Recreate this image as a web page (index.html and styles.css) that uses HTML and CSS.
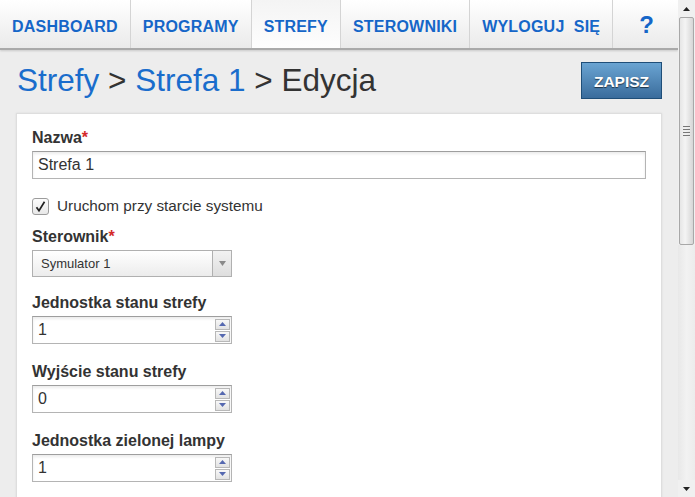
FILE: index.html
```html
<!DOCTYPE html>
<html lang="pl">
<head>
<meta charset="utf-8">
<title>Strefy - Edycja</title>
<link rel="stylesheet" href="styles.css">
</head>
<body>
<div class="window">
  <div class="page">
    <nav class="nav">
      <a class="nav-item">DASHBOARD</a>
      <a class="nav-item">PROGRAMY</a>
      <a class="nav-item active">STREFY</a>
      <a class="nav-item">STEROWNIKI</a>
      <a class="nav-item">WYLOGUJ&nbsp; SIĘ</a>
      <a class="nav-item help">?</a>
    </nav>
    <div class="content">
      <div class="header">
        <h1 class="title"><a class="crumb">Strefy</a> &gt; <a class="crumb">Strefa 1</a> &gt; Edycja</h1>
        <button class="btn-save">ZAPISZ</button>
      </div>
      <div class="card">
        <div class="field f-name">
          <label class="label">Nazwa<span class="req">*</span></label>
          <input class="text-input" type="text" value="Strefa 1">
        </div>
        <div class="check-row">
          <span class="checkbox"><svg width="13" height="13" viewBox="0 0 13 13"><path d="M2.5 7.2 L5 10.8 L10.5 1.8" fill="none" stroke="#222" stroke-width="1.7"/></svg></span>
          <span class="check-label">Uruchom przy starcie systemu</span>
        </div>
        <div class="field f-select">
          <label class="label">Sterownik<span class="req">*</span></label>
          <div class="select">
            <span class="select-value">Symulator 1</span>
            <span class="select-btn"><svg width="7" height="5" viewBox="0 0 7 5"><path d="M0 0 L7 0 L3.5 5 Z" fill="#8a8a8a"/></svg></span>
          </div>
        </div>
        <div class="field f-num">
          <label class="label">Jednostka stanu strefy</label>
          <div class="numbox">
            <input class="num-input" type="text" value="1">
            <div class="spin">
              <span class="spin-btn"><svg width="7" height="4" viewBox="0 0 7 4"><path d="M0 4 L7 4 L3.5 0 Z" fill="#5568b0"/></svg></span>
              <span class="spin-btn"><svg width="7" height="4" viewBox="0 0 7 4"><path d="M0 0 L7 0 L3.5 4 Z" fill="#5568b0"/></svg></span>
            </div>
          </div>
        </div>
        <div class="field f-num">
          <label class="label">Wyjście stanu strefy</label>
          <div class="numbox">
            <input class="num-input" type="text" value="0">
            <div class="spin">
              <span class="spin-btn"><svg width="7" height="4" viewBox="0 0 7 4"><path d="M0 4 L7 4 L3.5 0 Z" fill="#5568b0"/></svg></span>
              <span class="spin-btn"><svg width="7" height="4" viewBox="0 0 7 4"><path d="M0 0 L7 0 L3.5 4 Z" fill="#5568b0"/></svg></span>
            </div>
          </div>
        </div>
        <div class="field f-num">
          <label class="label">Jednostka zielonej lampy</label>
          <div class="numbox">
            <input class="num-input" type="text" value="1">
            <div class="spin">
              <span class="spin-btn"><svg width="7" height="4" viewBox="0 0 7 4"><path d="M0 4 L7 4 L3.5 0 Z" fill="#5568b0"/></svg></span>
              <span class="spin-btn"><svg width="7" height="4" viewBox="0 0 7 4"><path d="M0 0 L7 0 L3.5 4 Z" fill="#5568b0"/></svg></span>
            </div>
          </div>
        </div>
      </div>
    </div>
  </div>
  <div class="scrollbar">
    <div class="sb-btn"><svg width="7" height="4" viewBox="0 0 7 4"><path d="M0 4 L7 4 L3.5 0 Z" fill="#222"/></svg></div>
    <div class="sb-thumb"><span class="grip"></span><span class="grip"></span><span class="grip"></span><span class="grip"></span></div>
    <div class="sb-track"></div>
    <div class="sb-btn"><svg width="7" height="4" viewBox="0 0 7 4"><path d="M0 0 L7 0 L3.5 4 Z" fill="#222"/></svg></div>
  </div>
</div>
</body>
</html>
```
FILE: styles.css
```css
* { box-sizing: border-box; }
html, body { margin: 0; padding: 0; height: 100%; overflow: hidden; }
body {
  font-family: "Liberation Sans", Arial, sans-serif;
  background: #ededed;
  color: #333;
}
.window { display: flex; height: 100vh; }
.page { flex: 1; min-width: 0; overflow: hidden; }

.nav {
  display: flex;
  height: 50px;
  background: linear-gradient(#ffffff, #eaeaea);
  border-bottom: 2px solid #a9a9a9;
  box-shadow: 0 1px 2px rgba(0,0,0,0.15);
}
.nav-item {
  display: flex;
  align-items: center;
  padding: 6px 12px 0 12px;
  border-right: 1px solid #d4d4d4;
  color: #1566c8;
  font-weight: bold;
  font-size: 16px;
  letter-spacing: 0.2px;
  white-space: nowrap;
}
.nav-item.active { background: linear-gradient(#f4f4f4, #fdfdfd); }
.nav-item.help {
  flex: 1;
  justify-content: center;
  border-right: none;
  font-size: 24px;
  padding: 2px 0 0 2px;
}

.content { padding: 12px 16px 0 16px; }
.header {
  display: flex;
  align-items: center;
  justify-content: space-between;
  margin-bottom: 14px;
}
.title {
  margin: 0;
  font-weight: normal;
  font-size: 31.5px;
  line-height: 37px;
  color: #333;
  padding-left: 1px;
}
.crumb { color: #1a6dcc; }
.btn-save {
  width: 81px;
  height: 37px;
  border: 1px solid #1f4e78;
  background: linear-gradient(#6aa4d2, #3a6c9c);
  color: #fff;
  font-family: "Liberation Sans", Arial, sans-serif;
  font-weight: bold;
  font-size: 15.5px;
  text-shadow: 0 1px 1px rgba(0,0,0,0.6);
  padding: 2px 0 0 0;
}

.card {
  background: #fff;
  border: 1px solid #dedede;
  box-shadow: 0 0 2px rgba(0,0,0,0.08);
  padding: 15px 15px 20px 15px;
}
.label {
  display: block;
  font-weight: bold;
  font-size: 16px;
  line-height: 18px;
  margin-bottom: 4px;
  color: #333;
}
.req { color: #d42a2a; }
.text-input {
  display: block;
  width: 100%;
  height: 28px;
  border: 1px solid #b4b4b4;
  border-top-color: #9e9e9e;
  box-shadow: inset 0 2px 3px rgba(0,0,0,0.08);
  font-family: "Liberation Sans", Arial, sans-serif;
  font-size: 16px;
  color: #333;
  padding: 0 5px;
  outline: none;
}
.f-name { margin-bottom: 18px; }
.check-row {
  display: flex;
  align-items: center;
  height: 18px;
  margin-bottom: 13px;
}
.checkbox {
  width: 17px;
  height: 17px;
  border: 1px solid #9c9c9c;
  border-radius: 3px;
  background: linear-gradient(#fdfdfd, #e8e8e8);
  display: flex;
  align-items: center;
  justify-content: center;
  margin-right: 8px;
}
.check-label { font-size: 15.3px; color: #333; }

.f-select { margin-bottom: 17px; }
.select {
  display: flex;
  width: 200px;
  height: 27px;
  border: 1px solid #b0b0b0;
  background: linear-gradient(#ffffff, #ececec);
}
.select-value {
  flex: 1;
  display: flex;
  align-items: center;
  padding-left: 8px;
  font-size: 13px;
  color: #333;
}
.select-btn {
  width: 19px;
  border-left: 1px solid #b0b0b0;
  background: linear-gradient(#f2f2f2, #dedede);
  display: flex;
  align-items: center;
  justify-content: center;
}

.f-num { margin-bottom: 19px; }
.numbox {
  display: flex;
  align-items: center;
  width: 200px;
  height: 28px;
  border: 1px solid #b4b4b4;
  border-top-color: #9e9e9e;
  box-shadow: inset 0 2px 3px rgba(0,0,0,0.08);
  background: #fff;
  padding-right: 1px;
}
.num-input {
  flex: 1;
  min-width: 0;
  height: 100%;
  border: none;
  background: transparent;
  font-family: "Liberation Sans", Arial, sans-serif;
  font-size: 16px;
  color: #333;
  padding: 0 5px;
  outline: none;
}
.spin {
  display: flex;
  flex-direction: column;
  gap: 1px;
  width: 15px;
}
.spin-btn {
  height: 11px;
  border: 1px solid #b8b8b8;
  background: linear-gradient(#f8f8f8, #e2e2e2);
  display: flex;
  align-items: center;
  justify-content: center;
}

.scrollbar {
  width: 17px;
  display: flex;
  flex-direction: column;
  background: #f0f0f0;
}
.sb-btn {
  height: 17px;
  display: flex;
  align-items: center;
  justify-content: center;
  background: #f0f0f0;
}
.sb-thumb {
  height: 228px;
  margin: 0 1px;
  border: 1px solid #a8a8a8;
  border-radius: 2px;
  background: linear-gradient(90deg, #e6e6e6, #f4f4f4 40%, #d6d6d6);
  display: flex;
  flex-direction: column;
  align-items: center;
  justify-content: center;
  gap: 1px;
}
.grip { width: 7px; height: 1px; background: #777; border-bottom: 1px solid #eee; box-sizing: content-box; }
.sb-track {
  flex: 1;
  background: linear-gradient(90deg, #e8e8e8, #f2f2f2 50%, #ececec);
}
```
